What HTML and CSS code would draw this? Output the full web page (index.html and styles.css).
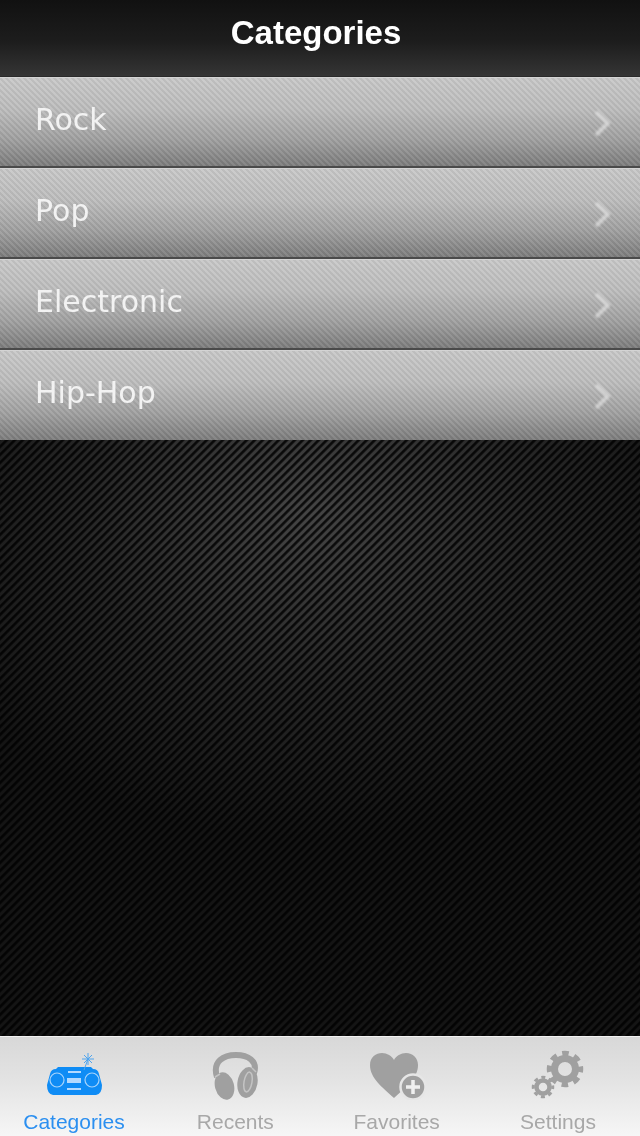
FILE: index.html
```html
<!DOCTYPE html>
<html lang="en">
<head>
<meta charset="utf-8">
<title>Categories</title>
<link rel="stylesheet" href="styles.css">
</head>
<body>
<div class="app">
  <header class="nav"><h1 class="nav-title">Categories</h1></header>
  <ul class="list">
    <li class="row"><span class="row-label">Rock</span><svg class="chev" viewBox="0 0 20 30"><path d="M3 3 L15 14 L3 26"/></svg></li>
    <li class="row"><span class="row-label">Pop</span><svg class="chev" viewBox="0 0 20 30"><path d="M3 3 L15 14 L3 26"/></svg></li>
    <li class="row"><span class="row-label">Electronic</span><svg class="chev" viewBox="0 0 20 30"><path d="M3 3 L15 14 L3 26"/></svg></li>
    <li class="row"><span class="row-label">Hip-Hop</span><svg class="chev" viewBox="0 0 20 30"><path d="M3 3 L15 14 L3 26"/></svg></li>
  </ul>
  <main class="content"></main>
  <nav class="tabs">
    <div class="tab active">
      <svg class="tab-icon" viewBox="0 0 60 50">
        <path class="fill" d="M6 24 Q7 19 12 19 L14 17 L47 17 L49 19 Q54 19 55 24 L58 35 Q58 44 52 45 L9 45 Q3 44 3 35 Z"/>
        <circle class="cut" cx="13" cy="30" r="7"/><circle class="cut" cx="48" cy="30" r="7"/>
        <rect class="hole" x="24" y="21" width="13" height="2"/><rect class="hole" x="23" y="28" width="14" height="5"/><rect class="hole" x="23" y="38" width="14" height="2"/>
        <path class="ant" d="M40 20 L44 9 M44 3 V15 M38 9 H50 M40 5 L48 13 M48 5 L40 13"/>
      </svg>
      <span class="tab-label">Categories</span>
    </div>
    <div class="tab">
      <svg class="tab-icon" viewBox="0 0 60 50">
        <path class="band" d="M12 27 C7 11 19 5 31 5 C43 5 53 11 49 23"/>
        <ellipse class="fill" cx="19.5" cy="36" rx="9.5" ry="14" transform="rotate(-15 19.5 36)"/>
        <ellipse class="fill" cx="42.5" cy="32.5" rx="10" ry="15.5" transform="rotate(10 42.5 32.5)"/>
        <ellipse class="line" cx="43" cy="32" rx="4" ry="10" transform="rotate(10 43 32)"/>
        <path class="line" d="M10 27 L15 24 M47 18 L51 22"/>
      </svg>
      <span class="tab-label">Recents</span>
    </div>
    <div class="tab">
      <svg class="tab-icon" viewBox="0 0 60 50">
        <path class="fill" d="M27 48 C15 37 3 28 3 15 C3 7 9 3 15 3 C20 3 25 6 27 10 C29 6 34 3 39 3 C46 3 51 8 51 15 C51 28 39 37 27 48 Z"/>
        <circle class="badge" cx="46" cy="37" r="12.5"/>
        <path class="plus" d="M39 37 H53 M46 30 V44"/>
      </svg>
      <span class="tab-label">Favorites</span>
    </div>
    <div class="tab">
      <svg class="tab-icon" viewBox="0 0 60 50">
        <circle class="ring" cx="37" cy="19" r="10.5"/>
        <circle class="teeth-big" cx="37" cy="19" r="15.5"/>
        <circle class="ring-small" cx="15" cy="37" r="6.5"/>
        <circle class="teeth-small" cx="15" cy="37" r="9.75"/>
      </svg>
      <span class="tab-label">Settings</span>
    </div>
  </nav>
</div>
</body>
</html>
```
FILE: styles.css
```css
* { box-sizing: border-box; }
html, body { margin: 0; padding: 0; background: #000; }
.app {
  width: 640px;
  height: 1136px;
  display: flex;
  flex-direction: column;
  overflow: hidden;
  font-family: "Liberation Sans", Arial, sans-serif;
}
.nav {
  height: 77px;
  flex: none;
  display: flex;
  justify-content: center;
  padding: 13px 8px 0 0;
  background: linear-gradient(#111 0%, #1d1d1d 55%, #353535 100%);
  border-bottom: 1px solid #2a2a2a;
}
.nav-title {
  margin: 0;
  font-size: 33px;
  line-height: 40px;
  font-weight: 700;
  color: #fff;
  filter: blur(0.6px);
}
.list { list-style: none; margin: 0; padding: 0; flex: none; }
.row {
  height: 91px;
  display: flex;
  align-items: center;
  justify-content: space-between;
  padding: 0 27px 6px 35px;
  border-top: 1px solid #d4d4d4;
  border-bottom: 2px solid #4a4a4a;
  background:
    repeating-linear-gradient(45deg, rgba(255,255,255,.07) 0 1.4px, rgba(0,0,0,.05) 2.1px 3.5px, rgba(255,255,255,.07) 4.243px),
    linear-gradient(#c8c8c8 0%, #bdbdbd 35%, #a0a0a0 70%, #7c7c7c 100%);
}
.row:last-child { height: 90px; border-bottom: 0; }
.row-label {
  font-family: "DejaVu Sans", Verdana, sans-serif;
  font-size: 30px;
  color: #f2f2f2;
  filter: blur(0.6px);
}
.chev { width: 20px; height: 30px; margin-top: 9px; filter: blur(1px); }
.chev path { fill: none; stroke: #e6e6e6; stroke-width: 4; opacity: .65; }
.content {
  flex: 1;
  background:
    repeating-linear-gradient(-45deg, rgba(0,0,0,0) 0 1.6px, rgba(0,0,0,.82) 3px 4.3px, rgba(0,0,0,0) 5.657px),
    radial-gradient(ellipse 65% 55% at 48% 12%, #454545 0%, #262626 55%, #141414 100%);
}
.tabs {
  height: 100px;
  flex: none;
  display: flex;
  justify-content: space-between;
  padding-right: 8px;
  border-top: 1px solid #f2f2f2;
  background: linear-gradient(#d8d8d8 0%, #e2e2e2 40%, #f6f6f6 100%);
}
.tab {
  width: 148px;
  display: flex;
  flex-direction: column;
  align-items: center;
  padding-top: 13px;
  color: #a8a8a8;
}
.tab-icon { width: 60px; height: 50px; flex: none; filter: blur(0.6px); }
.tab-label { margin-top: 10px; font-size: 21px; line-height: 24px; filter: blur(0.7px); }
.active { color: #2b8ff0; }
.tab .fill { fill: #a0a0a0; }
.active .fill { fill: #0f8cf5; }
.cut { fill: #0f8cf5; stroke: #a8d4fb; stroke-width: 1.2; }
.hole { fill: #b4daff; }
.ant { fill: none; stroke: #4ea4ee; stroke-width: 1; }
.band { fill: none; stroke: #a0a0a0; stroke-width: 6; }
.line { fill: none; stroke: #c4c4c4; stroke-width: 1.5; }
.badge { fill: #a0a0a0; stroke: #e6e6e6; stroke-width: 2.5; }
.plus { fill: none; stroke: #efefef; stroke-width: 3.5; }
.ring { fill: none; stroke: #a0a0a0; stroke-width: 7; }
.teeth-big { fill: none; stroke: #a0a0a0; stroke-width: 5.5; stroke-dasharray: 6.5 5.67; stroke-dashoffset: 3.25; }
.ring-small { fill: none; stroke: #a0a0a0; stroke-width: 4.5; }
.teeth-small { fill: none; stroke: #a0a0a0; stroke-width: 3; stroke-dasharray: 4 3.66; stroke-dashoffset: 2; }
```
